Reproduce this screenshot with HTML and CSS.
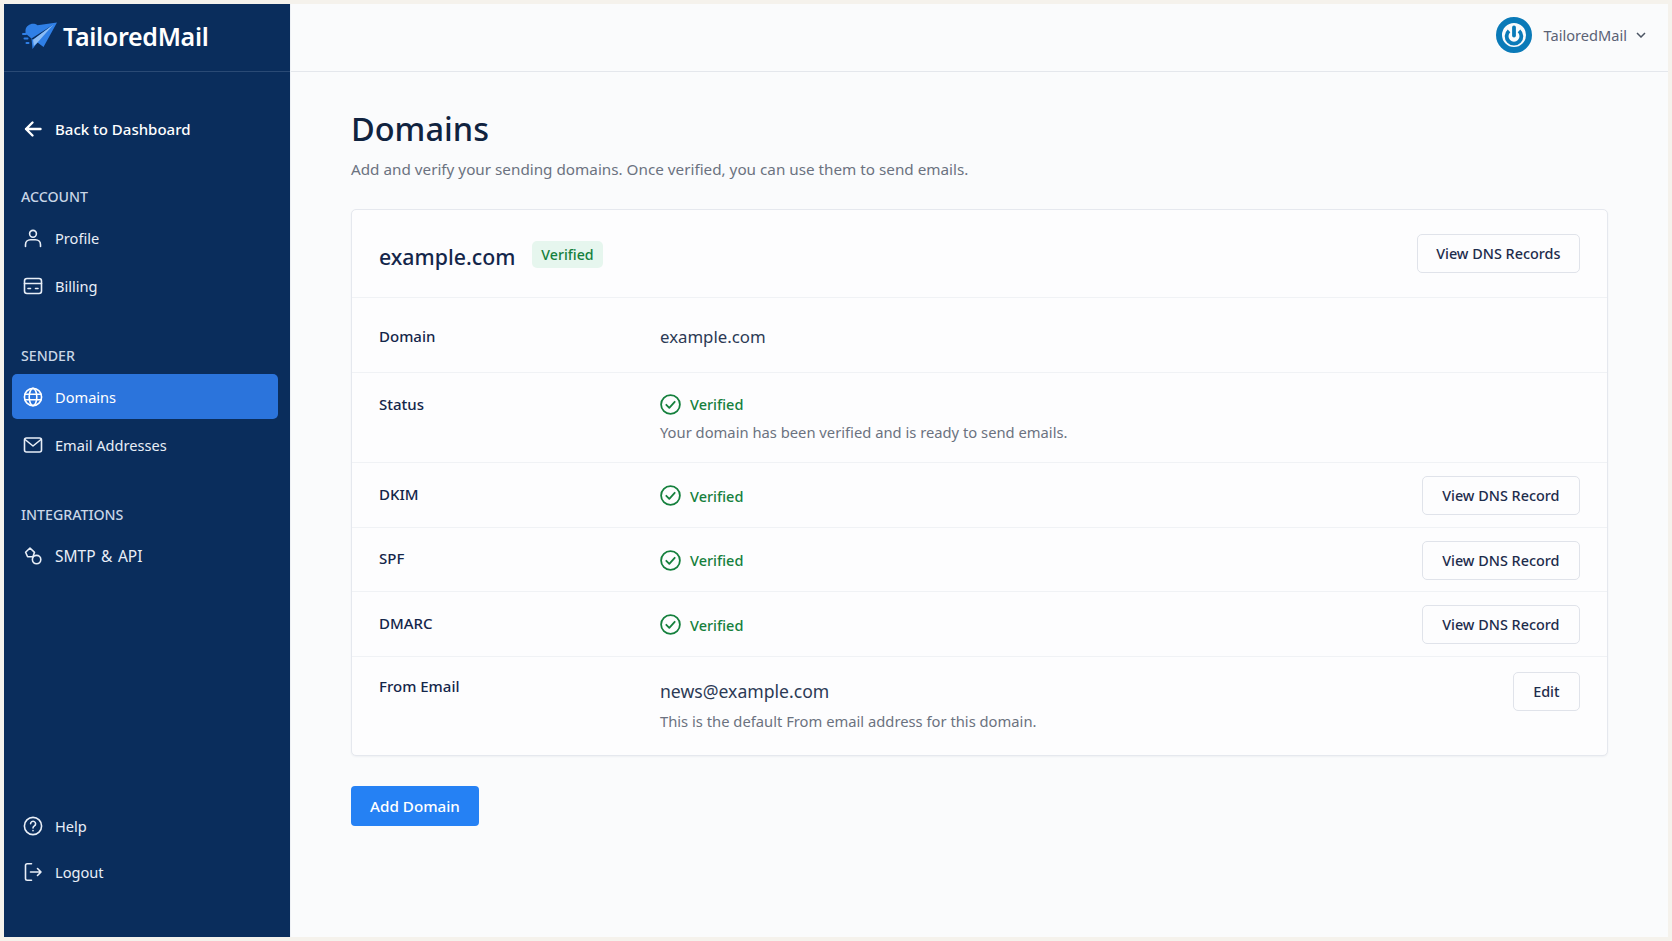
FILE: index.html
```html
<!DOCTYPE html>
<html lang="en">
<head>
    <meta charset="UTF-8">
    <meta name="viewport" content="width=device-width, initial-scale=1.0">
    <title>Domains - TailoredMail</title>
    <link rel="stylesheet" href="styles.css">
</head>
<body>
    <svg class="sprite" width="0" height="0">
        <symbol id="check" viewBox="0 0 21 21">
            <circle cx="10.5" cy="10.5" r="9.4" fill="none" stroke="currentColor" stroke-width="1.8"/>
            <path d="M6.3 10.8l3 3 5.4-6" fill="none" stroke="currentColor" stroke-width="1.8" stroke-linecap="round" stroke-linejoin="round"/>
        </symbol>
    </svg>
    <div class="app">
        <aside class="sidebar">
            <div class="brand">
                <svg class="brand-logo" viewBox="0 0 36 28" width="36" height="28">
                    <path fill="#2f7fe6" d="M3.5 8C4.500 2.500 11 0 15.500 3.200L35 0.500 21.500 25 15.500 20.500 10.500 27 9.500 16.500 3.500 11.500Z"/>
                    <path fill="#0a2d5c" d="M31.500 2.500L9.500 16.500 11 17.800Z"/>
                    <path fill="#8cbdf6" d="M11 17.800L31.500 2.500 15.500 20.500 11.800 24Z"/>
                    <path stroke="#2f7fe6" stroke-width="2" stroke-linecap="round" d="M1 12h3M2.500 16.500h3M4.500 21h2"/>
                </svg>
                <span class="brand-name">TailoredMail</span>
            </div>
            <nav class="nav">
                <a class="nav-item back">
                    <svg class="icon" viewBox="0 0 20 20"><path d="M17.500 10H3M9.500 3.500L3 10l6.500 6.500" stroke-width="2.400"/></svg>
                    Back to Dashboard
                </a>
                <div class="nav-section">
                    <div class="nav-label">ACCOUNT</div>
                    <a class="nav-item">
                        <svg class="icon" viewBox="0 0 20 20"><circle cx="10" cy="5.800" r="3.400"/><path d="M2.500 18.500v-1.800c0-3 2.200-5 5-5h5c2.800 0 5 2 5 5v1.800"/></svg>
                        Profile
                    </a>
                    <a class="nav-item">
                        <svg class="icon" viewBox="0 0 20 20"><rect x="1.500" y="2.500" width="17" height="15" rx="2.500"/><path d="M1.500 7.500h17M5 12.500h2.500M12.500 12.500h2.500"/></svg>
                        Billing
                    </a>
                </div>
                <div class="nav-section">
                    <div class="nav-label">SENDER</div>
                    <a class="nav-item active">
                        <svg class="icon" viewBox="0 0 20 20"><circle cx="10" cy="10" r="8.600"/><ellipse cx="10" cy="10" rx="3.800" ry="8.600"/><path d="M1.800 7.200h16.400M1.800 12.800h16.400"/></svg>
                        Domains
                    </a>
                    <a class="nav-item">
                        <svg class="icon" viewBox="0 0 20 20"><rect x="1.500" y="3" width="17" height="14" rx="2"/><path d="M2 4.500l8 6.500 8-6.500"/></svg>
                        Email Addresses
                    </a>
                </div>
                <div class="nav-section">
                    <div class="nav-label">INTEGRATIONS</div>
                    <a class="nav-item smtp">
                        <svg class="icon" viewBox="0 0 20 20"><path d="M7 2l4.500 4.300-1.600 4.500H4.600L2.600 6.300Z"/><circle cx="13.600" cy="13.600" r="4.200"/></svg>
                        SMTP &amp; API
                    </a>
                </div>
            </nav>
            <div class="nav-bottom">
                <a class="nav-item">
                    <svg class="icon" viewBox="0 0 20 20"><circle cx="10" cy="10" r="8.600"/><path d="M7.600 7.800a2.500 2.500 0 1 1 3.800 2.100c-.9.600-1.400 1-1.400 2M10 14.600v.2"/></svg>
                    Help
                </a>
                <a class="nav-item">
                    <svg class="icon" viewBox="0 0 20 20"><path d="M8.500 1.800H4.200c-1 0-1.700.7-1.700 1.700v13c0 1 .7 1.700 1.700 1.700h4.300M7.500 10h10.500M14.500 6.500L18 10l-3.500 3.500"/></svg>
                    Logout
                </a>
            </div>
        </aside>
        <div class="main">
            <header class="topbar">
                <svg class="avatar" viewBox="0 0 36 36" width="36" height="36">
                    <circle cx="18" cy="18" r="15" fill="none" stroke="#0a7ab8" stroke-width="6"/>
                    <path d="M13 13.800a7.400 7.400 0 1 0 10 0" fill="none" stroke="#0a7ab8" stroke-width="3.800"/>
                    <path d="M18 10.500v8" stroke="#0a7ab8" stroke-width="3.800" stroke-linecap="round"/>
                </svg>
                <span class="account-name">TailoredMail</span>
                <svg class="chevron" viewBox="0 0 10 6" width="10" height="6"><path d="M1 1l4 4 4-4" fill="none" stroke="#4b5563" stroke-width="1.500"/></svg>
            </header>
            <main class="content">
                <h1>Domains</h1>
                <p class="subtitle">Add and verify your sending domains. Once verified, you can use them to send emails.</p>
                <section class="card">
                    <div class="card-head">
                        <h2>example.com</h2>
                        <span class="badge">Verified</span>
                        <button class="btn btn-head">View DNS Records</button>
                    </div>
                    <div class="row row-domain">
                        <div class="row-label">Domain</div>
                        <div class="row-value">example.com</div>
                    </div>
                    <div class="row row-status">
                        <div class="row-label">Status</div>
                        <div>
                            <div class="verified"><svg class="check"><use href="#check"/></svg>Verified</div>
                            <div class="hint">Your domain has been verified and is ready to send emails.</div>
                        </div>
                    </div>
                    <div class="row row-record">
                        <div class="row-label">DKIM</div>
                        <div class="verified"><svg class="check"><use href="#check"/></svg>Verified</div>
                        <button class="btn">View DNS Record</button>
                    </div>
                    <div class="row row-record">
                        <div class="row-label">SPF</div>
                        <div class="verified"><svg class="check"><use href="#check"/></svg>Verified</div>
                        <button class="btn">View DNS Record</button>
                    </div>
                    <div class="row row-record">
                        <div class="row-label">DMARC</div>
                        <div class="verified"><svg class="check"><use href="#check"/></svg>Verified</div>
                        <button class="btn">View DNS Record</button>
                    </div>
                    <div class="row row-from">
                        <div class="row-label">From Email</div>
                        <div>
                            <div class="row-value">news@example.com</div>
                            <div class="hint">This is the default From email address for this domain.</div>
                        </div>
                        <button class="btn">Edit</button>
                    </div>
                </section>
                <button class="btn-primary">Add Domain</button>
            </main>
        </div>
    </div>
</body>
</html>
```

FILE: styles.css
```css
* {
    box-sizing: border-box;
}
body {
    font-family: "Noto Sans", Arial, sans-serif;
    margin: 0;
    padding: 4px;
    height: 941px;
    overflow: hidden;
    background-color: #f5f2ec;
    color: #14264a;
}
.sprite {
    display: block;
}
.app {
    display: flex;
    height: 933px;
    width: 1664px;
}

/* sidebar */
.sidebar {
    width: 286px;
    flex-shrink: 0;
    display: flex;
    flex-direction: column;
    background-color: #0a2d5c;
    color: #e8eef7;
}
.brand {
    height: 68px;
    display: flex;
    align-items: center;
    gap: 5px;
    padding: 0 0 3px 18px;
    border-bottom: 1px solid #2a4a75;
}
.brand-name {
    font-size: 25px;
    font-weight: 600;
    letter-spacing: -0.3px;
    color: #fff;
}
.nav {
    padding: 34px 12px 0 8px;
}
.nav-section {
    margin-bottom: 38px;
}
.nav-label {
    height: 20px;
    line-height: 20px;
    margin-bottom: 8px;
    padding-left: 9px;
    font-size: 14.2px;
    font-weight: 500;
    color: #c9d6e6;
}
.nav-item {
    height: 45px;
    display: flex;
    align-items: center;
    gap: 12px;
    margin-bottom: 3px;
    padding: 1px 0 0 11px;
    border-radius: 5px;
    font-size: 14.6px;
    cursor: pointer;
}
.nav-item.back {
    margin-bottom: 36px;
    font-size: 15px;
    font-weight: 500;
    color: #fff;
}
.nav-item.active {
    background-color: #2b74dc;
    color: #fff;
}
.nav-item.smtp {
    font-size: 15.5px;
    word-spacing: 1.5px;
}
.icon {
    width: 20px;
    height: 20px;
    flex-shrink: 0;
    fill: none;
    stroke: currentColor;
    stroke-width: 1.6;
    stroke-linecap: round;
    stroke-linejoin: round;
}
.nav-bottom {
    margin-top: auto;
    padding: 0 12px 42px 8px;
}
.nav-bottom .nav-item {
    margin-bottom: 1px;
}

/* main area */
.main {
    flex: 1;
    display: flex;
    flex-direction: column;
    background-color: #fafbfc;
    border-left: 1px solid #eef1f5;
}
.topbar {
    height: 68px;
    flex-shrink: 0;
    display: flex;
    align-items: center;
    justify-content: flex-end;
    padding: 0 22px 6px 0;
    border-bottom: 1px solid #e4e7ec;
}
.avatar {
    margin-right: 12px;
}
.account-name {
    margin-right: 9px;
    font-size: 14.6px;
    color: #5b6275;
}
.content {
    padding: 34px 60px 0;
}
h1 {
    margin: 0;
    font-size: 32.5px;
    line-height: 46px;
    font-weight: 500;
    color: #10233f;
}
.subtitle {
    margin: 5px 0 0;
    font-size: 15.25px;
    line-height: 24px;
    color: #6b7280;
}
.card {
    margin-top: 28px;
    background-color: #fdfdfe;
    border: 1px solid #e5e8ee;
    border-radius: 5px;
    box-shadow: 0 1px 2px rgba(20,38,74,0.05);
}
.card-head {
    height: 88px;
    display: flex;
    align-items: center;
    padding: 0 27px;
    border-bottom: 1px solid #f0f2f5;
}
h2 {
    margin: 6px 0 0;
    font-size: 21.3px;
    font-weight: 500;
    color: #14264a;
}
.badge {
    height: 27px;
    line-height: 27px;
    margin: 2px 0 0 17px;
    padding: 0 9px;
    background-color: #e6f6ee;
    border-radius: 5px;
    font-size: 14.2px;
    font-weight: 500;
    color: #15803d;
}
.btn {
    height: 39px;
    margin-left: auto;
    padding: 0 19.5px;
    background-color: #fdfdfe;
    border: 1px solid #e0e3ea;
    border-radius: 5px;
    font-family: inherit;
    font-size: 14.4px;
    font-weight: 500;
    color: #1d2c4c;
    cursor: pointer;
}
.btn-head {
    padding: 0 18.5px;
}
.row {
    display: grid;
    grid-template-columns: 281px 1fr auto;
    align-items: start;
    padding: 0 27px;
    border-bottom: 1px solid #f0f2f5;
}
.row:last-child {
    border-bottom: none;
}
.row-label {
    font-size: 15px;
    line-height: 22px;
    font-weight: 500;
    color: #14264a;
}
.row-value {
    font-size: 16.8px;
    line-height: 24px;
    color: #2c3a55;
}
.row-domain {
    height: 75px;
    padding-top: 27px;
}
.row-status {
    height: 90px;
    padding-top: 20px;
}
.row-record {
    height: 64.5px;
    padding-top: 13px;
}
.row-record .row-label {
    margin-top: 6.5px;
}
.row-from {
    height: 98px;
    padding-top: 18px;
}
.row-from .row-value {
    margin-top: 4px;
    font-size: 17.6px;
}
.row-from .btn {
    margin-top: -3px;
}
.verified {
    display: flex;
    align-items: center;
    gap: 9px;
    height: 22px;
    font-size: 14.5px;
    font-weight: 500;
    color: #15803d;
}
.row-record .verified {
    margin-top: 8.5px;
}
.check {
    width: 21px;
    height: 21px;
}
.hint {
    margin-top: 6px;
    font-size: 14.75px;
    line-height: 22px;
    color: #6b7280;
}
.row-from .hint {
    margin-top: 7px;
}
.btn-primary {
    display: block;
    width: 128px;
    height: 40px;
    margin-top: 30px;
    background-color: #2581f4;
    border: none;
    border-radius: 4px;
    font-family: inherit;
    font-size: 15.2px;
    font-weight: 500;
    color: #fff;
    cursor: pointer;
}
```
